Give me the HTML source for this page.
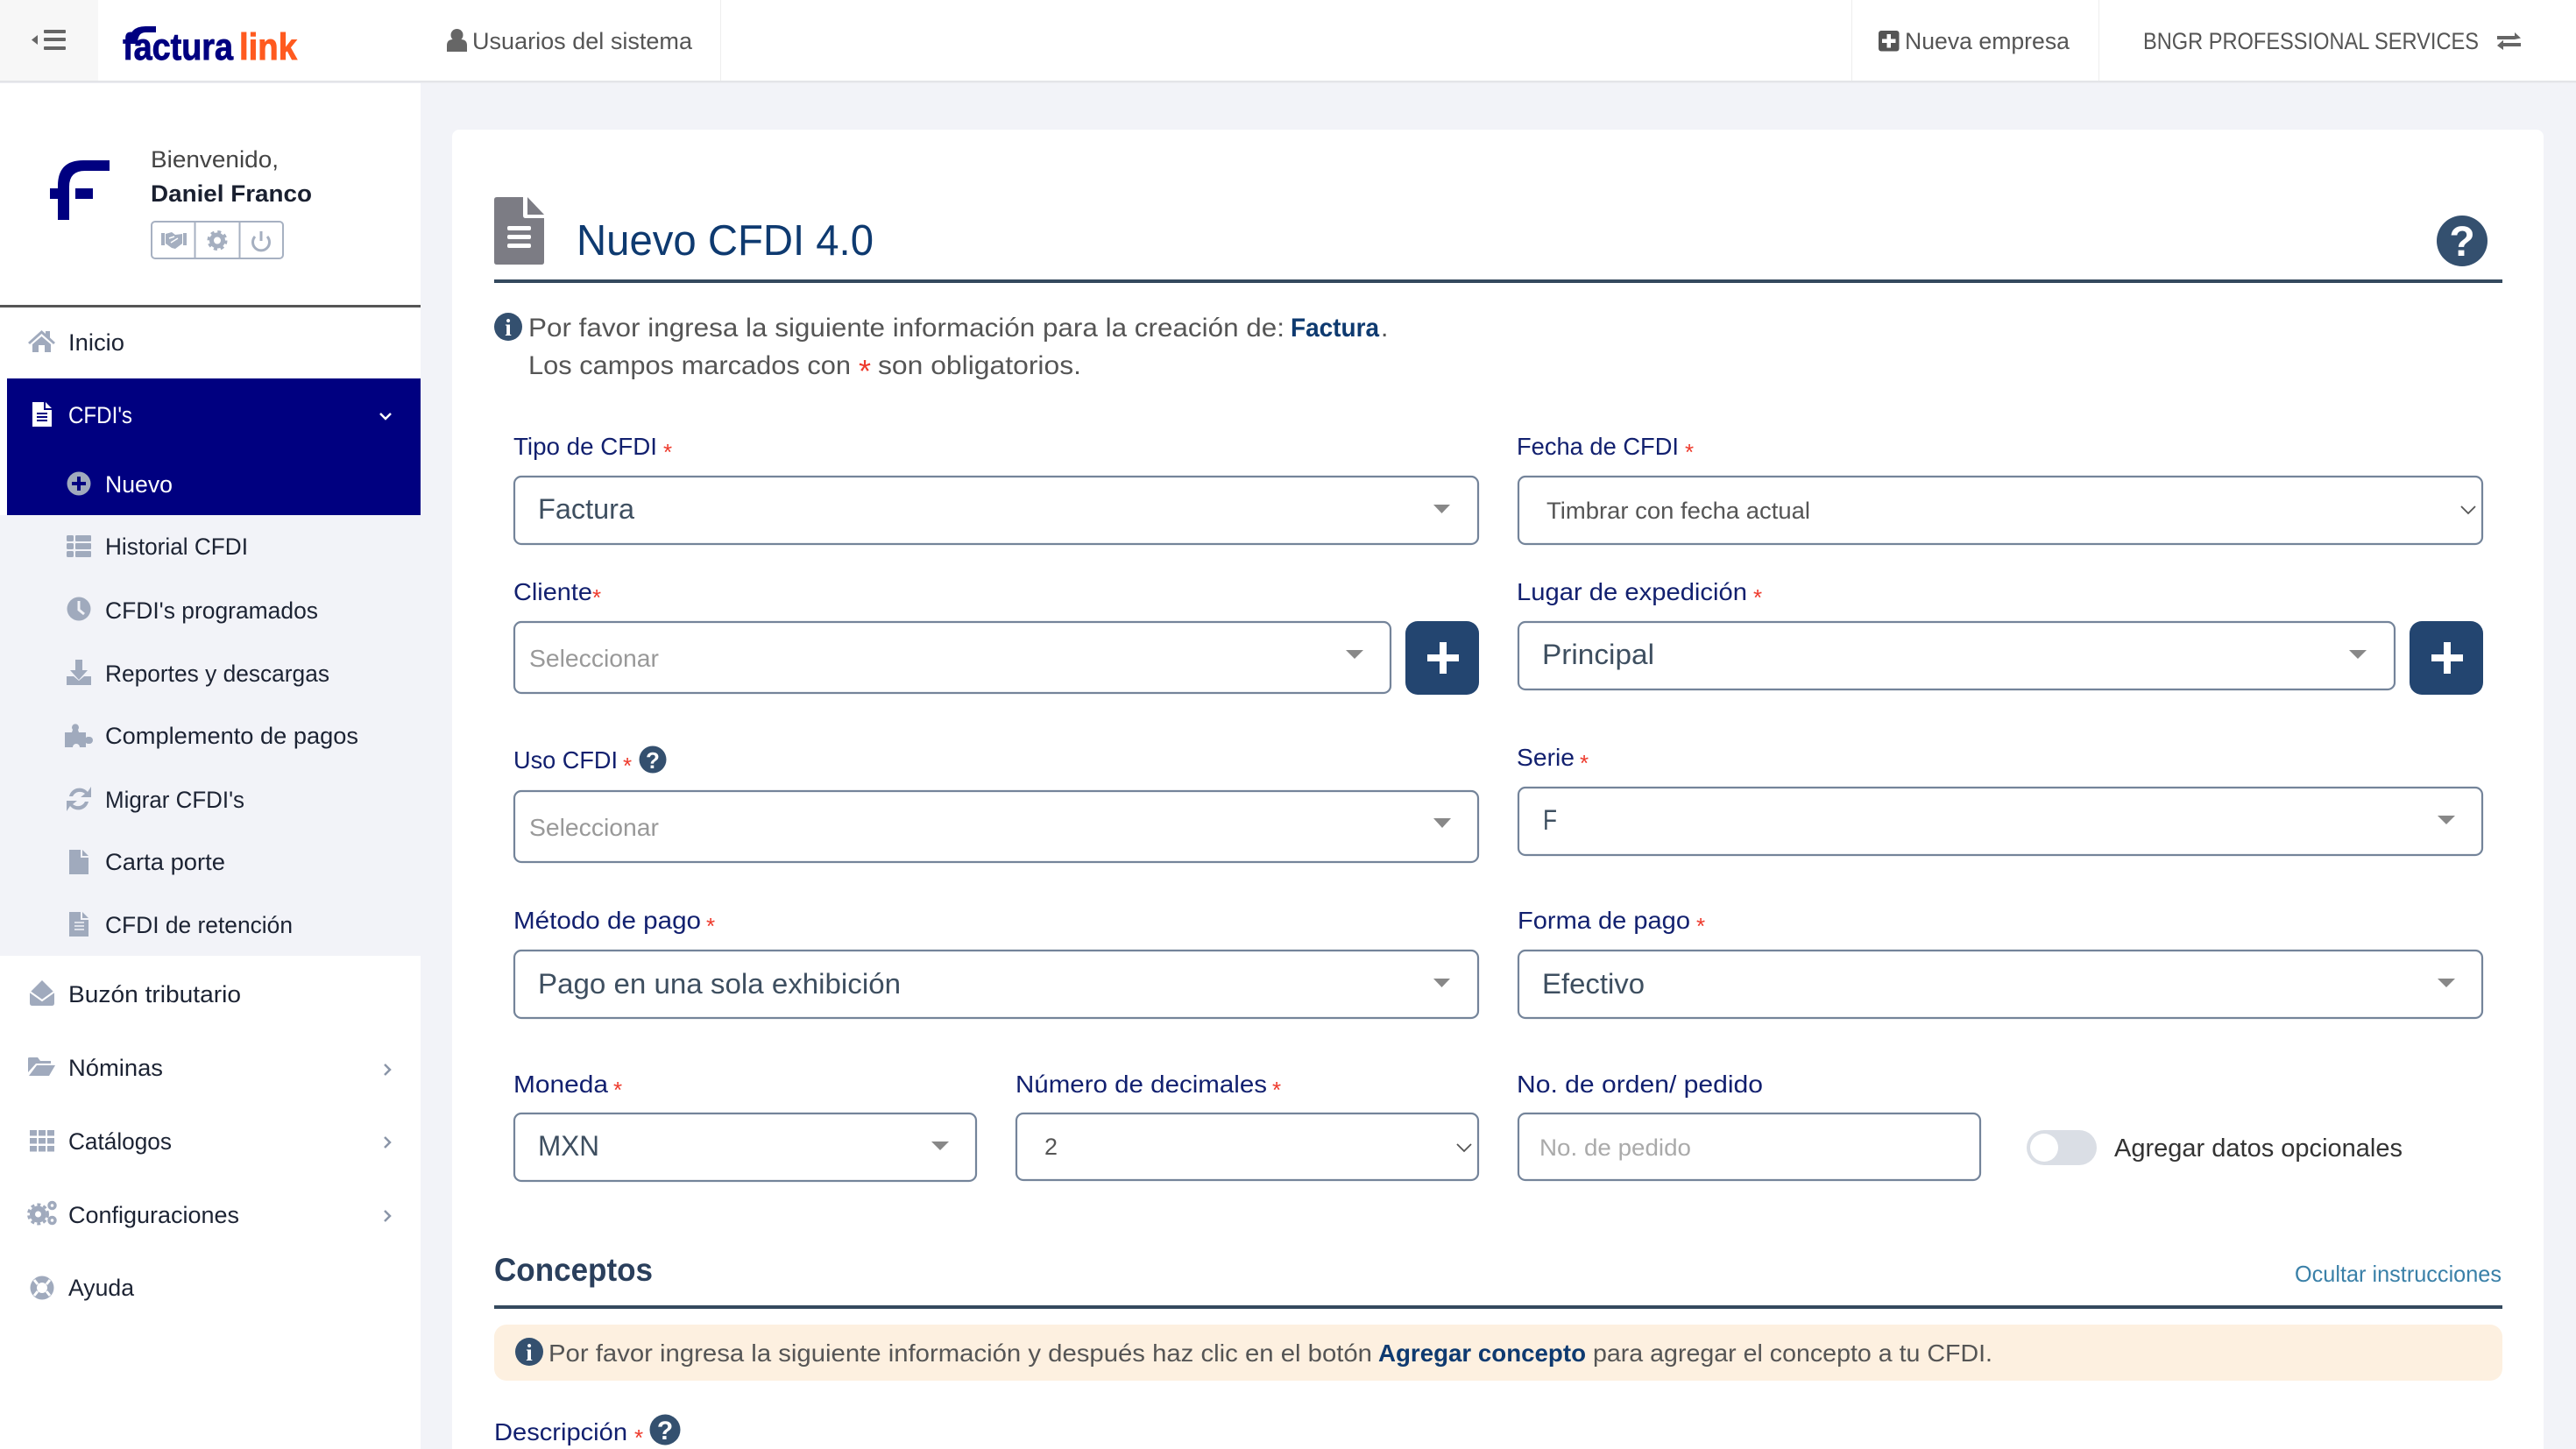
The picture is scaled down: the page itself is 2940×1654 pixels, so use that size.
<!DOCTYPE html>
<html lang="es">
<head>
<meta charset="utf-8">
<title>Nuevo CFDI 4.0</title>
<style>
html,body{margin:0;padding:0;width:2940px;height:1654px;overflow:hidden;background:#f2f3f8}
svg{display:block}
text{font-family:"Liberation Sans",Arial,sans-serif;white-space:pre}
.nav{font-size:27px;fill:#1c2333}
.hd{font-size:27px;fill:#555}
.lb{font-size:28px;fill:#12206f}
.st{font-size:26px;fill:#ee3a2c}
.in{font-size:30px;fill:#555}
.sv{font-size:32px;fill:#3e4f60}
.ph{font-size:28px;fill:#999}
.nt{font-size:27px;fill:#555}
.bn{font-size:28px;fill:#555}
.b{fill:none;stroke:#74849a;stroke-width:2.2}
.ic{fill:#a0aabd}
</style>
</head>
<body>
<svg xmlns="http://www.w3.org/2000/svg" width="2940" height="1654" viewBox="0 0 2940 1654">
<rect width="2940" height="1654" fill="#f2f3f8"/>

<!-- Sidebar -->
<rect x="0" y="92" width="480" height="1562" fill="#fff"/>
<rect x="0" y="588" width="480" height="503" fill="#f2f3f8"/>
<rect x="8" y="432" width="472" height="156" fill="#000080"/>
<rect x="0" y="348" width="480" height="3" fill="#555"/>

<!-- Header -->
<rect x="0" y="0" width="2940" height="92" fill="#fff"/>
<rect x="0" y="92" width="2940" height="2" fill="#e3e4e8"/>
<rect x="0" y="94" width="2940" height="1" fill="#ecedf2"/>
<rect x="0" y="0" width="112" height="92" fill="#f7f7f7"/>
<rect x="822" y="0" width="1" height="92" fill="#eee"/>
<rect x="2113" y="0" width="1" height="92" fill="#eee"/>
<rect x="2395" y="0" width="1" height="92" fill="#eee"/>
<!-- hamburger -->
<g fill="#666">
<rect x="50" y="34" width="25" height="4" rx="1"/><rect x="50" y="43" width="25" height="4" rx="1"/><rect x="50" y="53" width="25" height="4" rx="1"/>
<path d="M43 40 L36 45.500 L43 51 Z"/>
</g>
<!-- logo -->
<text x="140" y="68" font-size="43" font-weight="700" fill="#000080" stroke="#000080" stroke-width="0.9" textLength="126" lengthAdjust="spacingAndGlyphs">factura</text>
<path d="M147 50 Q147 30 166 30 H178 V37 H166 Q157 37 157 50 Z" fill="#000080"/>
<text x="273" y="68" font-size="43" font-weight="700" fill="#ff5a1f" stroke="#ff5a1f" stroke-width="0.9" textLength="66" lengthAdjust="spacingAndGlyphs">link</text>
<!-- header items -->
<path d="M510 59 V52 Q510 45 517 45 H526 Q533 45 533 52 V59 Z" fill="#666"/><circle cx="521.500" cy="40" r="7" fill="#666"/>
<text x="539" y="56" class="hd" textLength="251" lengthAdjust="spacingAndGlyphs">Usuarios del sistema</text>
<rect x="2144" y="35" width="23.500" height="23.500" rx="3" fill="#555"/><path d="M2153.500 39 h4.500 v5.500 h5.500 v4.500 h-5.500 v5.500 h-4.500 v-5.500 h-5.500 v-4.500 h5.500 z" fill="#fff"/>
<text x="2174" y="56" class="hd" textLength="188" lengthAdjust="spacingAndGlyphs">Nueva empresa</text>
<text x="2446" y="56" class="hd" textLength="383" lengthAdjust="spacingAndGlyphs">BNGR PROFESSIONAL SERVICES</text>
<path d="M2850 41 H2870 V37 L2877 43.500 L2870 45 H2850 Z M2877 49 H2857 V45.800 L2850 52 L2857 57 V53 H2877 Z" fill="#666"/>

<!-- User -->
<path d="M66 251 V212 Q66 183 95 183 H125 V195 H97 Q79 195 79 213 V251 Z" fill="#000080"/>
<rect x="57" y="215" width="20" height="12" fill="#000080"/>
<rect x="86" y="215" width="20" height="12" fill="#000080"/>
<text x="172" y="191" font-size="27" fill="#444" textLength="146" lengthAdjust="spacingAndGlyphs">Bienvenido,</text>
<text x="172" y="230" font-size="27" font-weight="700" fill="#1a2030" textLength="184" lengthAdjust="spacingAndGlyphs">Daniel Franco</text>
<rect x="173" y="253" width="150" height="42" rx="4" fill="#fff" stroke="#a7b1c2" stroke-width="2"/>
<rect x="221.500" y="253" width="2" height="42" fill="#a7b1c2"/><rect x="272.500" y="253" width="2" height="42" fill="#a7b1c2"/>
<g fill="#a5afc0">
<path d="M184 266 h4 v14 h-4 z M209 266 h4 v14 h-4 z M189 267 L196 265 L200 268 L208 267 V278 L200 284 L196 283 L189 278 Z"/>
<circle cx="248" cy="274.500" r="6.500" fill="none" stroke="#a5afc0" stroke-width="5"/>
<circle cx="248" cy="274.500" r="10" fill="none" stroke="#a5afc0" stroke-width="3" stroke-dasharray="4 3.850"/>
</g>
<path d="M193 272 L199 270 M195 277 L203 272" stroke="#fff" stroke-width="1.500"/>
<path d="M291 270 A9.500 9.500 0 1 0 305 270" fill="none" stroke="#a5afc0" stroke-width="3"/><rect x="296.500" y="264" width="3" height="11" fill="#a5afc0"/>

<!-- Nav -->
<g class="ic">
<path d="M47.500 377 L32 391 L34 393 L47.500 381 L61 393 L63 391 L57 385.500 V378 H52 V381 Z"/><path d="M47.500 384 L37 393 V402 H44 V394 H51 V402 H58 V393 Z"/>
<circle cx="90" cy="552" r="13.500"/>
<rect x="76" y="611" width="8" height="7" rx="1.500"/><rect x="76" y="620" width="8" height="7" rx="1.500"/><rect x="76" y="629" width="8" height="7" rx="1.500"/>
<rect x="86" y="611" width="18" height="7" rx="1"/><rect x="86" y="620" width="18" height="7" rx="1"/><rect x="86" y="629" width="18" height="7" rx="1"/>
<circle cx="90" cy="695" r="13.500"/>
<path d="M86 753 h8 v12 h6 l-10 11 l-10 -11 h6 z"/><path d="M76 772 h8 l6 5 l6 -5 h8 v10 h-28 z"/>
<path d="M74 836 h8 l1-3 a4 4 0 1 1 6 0 l1 3 h8 v6 a4 4 0 1 1 0 6 v5 h-7 a4 4 0 1 0 -8 0 h-9 z"/><circle cx="102" cy="845" r="4"/>
<path d="M79 909 A12 12 0 0 1 100 904 L104 898 V910 H92 L97 906 A9 9 0 0 0 83 909 Z"/><path d="M101 915 A12 12 0 0 1 80 920 L76 926 V914 H88 L83 918 A9 9 0 0 0 97 915 Z"/>
<path d="M79 970 H92 V979 H101 V998 H79 Z M94 970 L101 977 H94 Z"/>
<path d="M79 1041 H92 V1050 H101 V1069 H79 Z M94 1041 L101 1048 H94 Z"/>
<path d="M34 1133 L48 1119 L62 1133 V1145 Q62 1148 59 1148 H37 Q34 1148 34 1145 Z"/>
<path d="M32 1224 V1208 Q32 1207 34 1207 H43 L46 1211 H58 V1214 H41 Z M33 1228 L42 1216 H63 L56 1228 Z"/>
<rect x="34" y="1290" width="8" height="6.500"/><rect x="44" y="1290" width="8" height="6.500"/><rect x="54" y="1290" width="8" height="6.500"/>
<rect x="34" y="1299" width="8" height="6.500"/><rect x="44" y="1299" width="8" height="6.500"/><rect x="54" y="1299" width="8" height="6.500"/>
<rect x="34" y="1308" width="8" height="6.500"/><rect x="44" y="1308" width="8" height="6.500"/><rect x="54" y="1308" width="8" height="6.500"/>
<circle cx="48" cy="1470" r="13.500"/>
</g>
<circle cx="43.500" cy="1386" r="6.500" fill="none" stroke="#a0aabd" stroke-width="6"/>
<circle cx="43.500" cy="1386" r="11" fill="none" stroke="#a0aabd" stroke-width="3" stroke-dasharray="4 3.200"/>
<circle cx="59.500" cy="1376" r="3.500" fill="none" stroke="#a0aabd" stroke-width="3.500"/>
<circle cx="59.500" cy="1393" r="3.500" fill="none" stroke="#a0aabd" stroke-width="3.500"/>
<circle cx="48" cy="1470" r="6" fill="#fff"/><path d="M39 1461 L43 1466 M57 1461 L53 1466 M39 1479 L43 1474 M57 1479 L53 1474" stroke="#fff" stroke-width="3"/>
<path d="M37 459 H50 V468 H59 V487 H37 Z M52 459 L59 466 H52 Z" fill="#fff"/>
<path d="M42 472 h12 M42 476 h12 M42 480 h12" stroke="#000080" stroke-width="2"/>
<path d="M88 544 h4 v6 h6 v4 h-6 v6 h-4 v-6 h-6 v-4 h6 z" fill="#000080"/>
<path d="M90 686 V696 L96 701" fill="none" stroke="#f2f3f8" stroke-width="3"/>
<path d="M85 1053 h11 M85 1057 h11 M85 1061 h11" stroke="#f2f3f8" stroke-width="1.500"/>
<path d="M34 1132 L48 1142 L62 1132" fill="none" stroke="#fff" stroke-width="2"/>

<text x="78" y="400" class="nav" textLength="64" lengthAdjust="spacingAndGlyphs">Inicio</text>
<text x="78" y="483" class="nav" style="fill:#fff" textLength="73" lengthAdjust="spacingAndGlyphs">CFDI's</text>
<text x="120" y="562" class="nav" style="fill:#fff" textLength="77" lengthAdjust="spacingAndGlyphs">Nuevo</text>
<text x="120" y="633" class="nav" textLength="163" lengthAdjust="spacingAndGlyphs">Historial CFDI</text>
<text x="120" y="706" class="nav" textLength="243" lengthAdjust="spacingAndGlyphs">CFDI's programados</text>
<text x="120" y="778" class="nav" textLength="256" lengthAdjust="spacingAndGlyphs">Reportes y descargas</text>
<text x="120" y="849" class="nav" textLength="289" lengthAdjust="spacingAndGlyphs">Complemento de pagos</text>
<text x="120" y="922" class="nav" textLength="159" lengthAdjust="spacingAndGlyphs">Migrar CFDI's</text>
<text x="120" y="993" class="nav" textLength="137" lengthAdjust="spacingAndGlyphs">Carta porte</text>
<text x="120" y="1065" class="nav" textLength="214" lengthAdjust="spacingAndGlyphs">CFDI de retención</text>
<text x="78" y="1144" class="nav" textLength="197" lengthAdjust="spacingAndGlyphs">Buzón tributario</text>
<text x="78" y="1228" class="nav" textLength="108" lengthAdjust="spacingAndGlyphs">Nóminas</text>
<text x="78" y="1312" class="nav" textLength="118" lengthAdjust="spacingAndGlyphs">Catálogos</text>
<text x="78" y="1396" class="nav" textLength="195" lengthAdjust="spacingAndGlyphs">Configuraciones</text>
<text x="78" y="1479" class="nav" textLength="75" lengthAdjust="spacingAndGlyphs">Ayuda</text>
<path d="M434 472 L440 478 L446 472" fill="none" stroke="#fff" stroke-width="2.500"/>
<g fill="none" stroke="#8a95a8" stroke-width="2.500">
<path d="M439 1215 L445 1221 L439 1227"/><path d="M439 1298 L445 1304 L439 1310"/><path d="M439 1382 L445 1388 L439 1394"/>
</g>

<!-- Card -->
<rect x="516" y="148" width="2387" height="1520" rx="8" fill="#fff"/>
<path d="M564 228 Q564 225 567 225 H597 V246 Q597 249 600 249 H621 V299 Q621 302 618 302 H567 Q564 302 564 299 Z M602 225 L621 245 H602 Z" fill="#7c7c84"/>
<rect x="579" y="258" width="27" height="5" rx="2" fill="#fff"/><rect x="579" y="268" width="27" height="5" rx="2" fill="#fff"/><rect x="579" y="278" width="27" height="5" rx="2" fill="#fff"/>
<text x="658" y="291" font-size="49" fill="#0e3a70" textLength="339" lengthAdjust="spacingAndGlyphs">Nuevo CFDI 4.0</text>
<rect x="564" y="319" width="2292" height="4" fill="#34495e"/>
<circle cx="2810" cy="275" r="29" fill="#34506f"/>
<text x="2810" y="292" font-size="48" font-weight="700" fill="#fff" text-anchor="middle">?</text>

<circle cx="580" cy="373" r="16" fill="#34506f"/>
<text x="580" y="383" font-size="27" font-weight="700" fill="#fff" text-anchor="middle" style="font-family:'Liberation Serif',serif">i</text>
<text x="603" y="384" class="in" textLength="863" lengthAdjust="spacingAndGlyphs">Por favor ingresa la siguiente información para la creación de:</text>
<text x="1473" y="384" class="in" font-weight="700" style="fill:#0e3a70" textLength="101" lengthAdjust="spacingAndGlyphs">Factura</text>
<text x="1576" y="384" class="in">.</text>
<text x="603" y="427" class="in" textLength="368" lengthAdjust="spacingAndGlyphs">Los campos marcados con</text>
<text x="980" y="436" font-size="36" fill="#ee3a2c">*</text>
<text x="1002" y="427" class="in" textLength="232" lengthAdjust="spacingAndGlyphs">son obligatorios.</text>

<!-- Tipo -->
<text x="586" y="519" class="lb" textLength="164" lengthAdjust="spacingAndGlyphs">Tipo de CFDI</text><text x="757" y="525" class="st">*</text>
<rect x="587" y="544" width="1100" height="77" rx="8" class="b" fill="#fff"/>
<text x="614" y="592" class="sv" textLength="110" lengthAdjust="spacingAndGlyphs">Factura</text>
<path d="M1636 576 H1655 L1645.500 586 Z" fill="#888"/>

<text x="1731" y="519" class="lb" textLength="185" lengthAdjust="spacingAndGlyphs">Fecha de CFDI</text><text x="1923" y="525" class="st">*</text>
<rect x="1733" y="544" width="1100" height="77" rx="8" class="b" fill="#fff"/>
<text x="1765" y="592" class="nt" textLength="301" lengthAdjust="spacingAndGlyphs">Timbrar con fecha actual</text>
<path d="M2809 578 L2817 586 L2825 578" fill="none" stroke="#555" stroke-width="1.800"/>

<!-- Cliente / Lugar -->
<text x="586" y="685" class="lb" textLength="90" lengthAdjust="spacingAndGlyphs">Cliente</text><text x="676" y="691" class="st">*</text>
<rect x="587" y="710" width="1000" height="81" rx="8" class="b" fill="#fff"/>
<text x="604" y="761" class="ph" textLength="148" lengthAdjust="spacingAndGlyphs">Seleccionar</text>
<path d="M1536 742 H1556 L1546 752 Z" fill="#888"/>
<rect x="1604" y="709" width="84" height="84" rx="14" fill="#234570"/>
<path d="M1643 733 h8 v14 h14 v8 h-14 v14 h-8 v-14 h-14 v-8 h14 z" fill="#fff"/>

<text x="1731" y="685" class="lb" textLength="263" lengthAdjust="spacingAndGlyphs">Lugar de expedición</text><text x="2001" y="691" class="st">*</text>
<rect x="1733" y="710" width="1000" height="77" rx="8" class="b" fill="#fff"/>
<text x="1760" y="758" class="sv" textLength="128" lengthAdjust="spacingAndGlyphs">Principal</text>
<path d="M2681 742 H2701 L2691 752 Z" fill="#888"/>
<rect x="2750" y="709" width="84" height="84" rx="14" fill="#234570"/>
<path d="M2789 733 h8 v14 h14 v8 h-14 v14 h-8 v-14 h-14 v-8 h14 z" fill="#fff"/>

<!-- Uso / Serie -->
<text x="586" y="877" class="lb" textLength="119" lengthAdjust="spacingAndGlyphs">Uso CFDI</text><text x="711" y="883" class="st">*</text>
<circle cx="745" cy="867" r="15.500" fill="#34506f"/>
<text x="745" y="877" font-size="26" font-weight="700" fill="#fff" text-anchor="middle">?</text>
<rect x="587" y="903" width="1100" height="81" rx="8" class="b" fill="#fff"/>
<text x="604" y="954" class="ph" textLength="148" lengthAdjust="spacingAndGlyphs">Seleccionar</text>
<path d="M1636 934 H1656 L1646 945 Z" fill="#888"/>

<text x="1731" y="874" class="lb" textLength="66" lengthAdjust="spacingAndGlyphs">Serie</text><text x="1803" y="880" class="st">*</text>
<rect x="1733" y="899" width="1100" height="77" rx="8" class="b" fill="#fff"/>
<text x="1761" y="947" class="sv" textLength="16" lengthAdjust="spacingAndGlyphs">F</text>
<path d="M2782 931 H2802 L2792 941 Z" fill="#888"/>

<!-- Metodo / Forma -->
<text x="586" y="1060" class="lb" textLength="214" lengthAdjust="spacingAndGlyphs">Método de pago</text><text x="806" y="1066" class="st">*</text>
<rect x="587" y="1085" width="1100" height="77" rx="8" class="b" fill="#fff"/>
<text x="614" y="1134" class="sv" textLength="414" lengthAdjust="spacingAndGlyphs">Pago en una sola exhibición</text>
<path d="M1636 1117 H1655 L1645.500 1127 Z" fill="#888"/>

<text x="1732" y="1060" class="lb" textLength="197" lengthAdjust="spacingAndGlyphs">Forma de pago</text><text x="1936" y="1066" class="st">*</text>
<rect x="1733" y="1085" width="1100" height="77" rx="8" class="b" fill="#fff"/>
<text x="1760" y="1134" class="sv" textLength="117" lengthAdjust="spacingAndGlyphs">Efectivo</text>
<path d="M2782 1117 H2802 L2792 1127 Z" fill="#888"/>

<!-- Moneda row -->
<text x="586" y="1247" class="lb" textLength="108" lengthAdjust="spacingAndGlyphs">Moneda</text><text x="700" y="1253" class="st">*</text>
<rect x="587" y="1271" width="527" height="77" rx="8" class="b" fill="#fff"/>
<text x="614" y="1319" class="sv" textLength="70" lengthAdjust="spacingAndGlyphs">MXN</text>
<path d="M1063 1303 H1083 L1073 1313 Z" fill="#888"/>

<text x="1159" y="1247" class="lb" textLength="287" lengthAdjust="spacingAndGlyphs">Número de decimales</text><text x="1452" y="1253" class="st">*</text>
<rect x="1160" y="1271" width="527" height="76" rx="8" class="b" fill="#fff"/>
<text x="1192" y="1318" class="nt" textLength="15" lengthAdjust="spacingAndGlyphs">2</text>
<path d="M1663 1306 L1671 1314 L1679 1306" fill="none" stroke="#555" stroke-width="1.800"/>

<text x="1731" y="1247" class="lb" textLength="281" lengthAdjust="spacingAndGlyphs">No. de orden/ pedido</text>
<rect x="1733" y="1271" width="527" height="76" rx="8" class="b" fill="#fff"/>
<text x="1757" y="1319" font-size="27" fill="#aaa" textLength="173" lengthAdjust="spacingAndGlyphs">No. de pedido</text>

<rect x="2313" y="1290" width="80" height="40" rx="20" fill="#dadee5"/>
<circle cx="2333" cy="1310" r="16" fill="#fff"/>
<text x="2413" y="1320" font-size="29" fill="#333" textLength="329" lengthAdjust="spacingAndGlyphs">Agregar datos opcionales</text>

<!-- Conceptos -->
<text x="564" y="1462" font-size="37" font-weight="700" fill="#2a3f5c" textLength="181" lengthAdjust="spacingAndGlyphs">Conceptos</text>
<text x="2619" y="1463" font-size="26" fill="#3a80a8" textLength="236" lengthAdjust="spacingAndGlyphs">Ocultar instrucciones</text>
<rect x="564" y="1490" width="2292" height="4" fill="#34495e"/>
<rect x="564" y="1512" width="2292" height="64" rx="14" fill="#fdf0e0"/>
<circle cx="604" cy="1543" r="16" fill="#34506f"/>
<text x="604" y="1553" font-size="27" font-weight="700" fill="#fff" text-anchor="middle" style="font-family:'Liberation Serif',serif">i</text>
<text x="626" y="1554" class="bn" textLength="940" lengthAdjust="spacingAndGlyphs">Por favor ingresa la siguiente información y después haz clic en el botón</text>
<text x="1573" y="1554" class="bn" font-weight="700" style="fill:#0e3a70" textLength="237" lengthAdjust="spacingAndGlyphs">Agregar concepto</text>
<text x="1818" y="1554" class="bn" textLength="456" lengthAdjust="spacingAndGlyphs">para agregar el concepto a tu CFDI.</text>

<text x="564" y="1644" class="lb" textLength="152" lengthAdjust="spacingAndGlyphs">Descripción</text><text x="724" y="1650" class="st">*</text>
<circle cx="759" cy="1632" r="17.500" fill="#34506f"/>
<text x="759" y="1643" font-size="30" font-weight="700" fill="#fff" text-anchor="middle">?</text>
</svg>
</body>
</html>
